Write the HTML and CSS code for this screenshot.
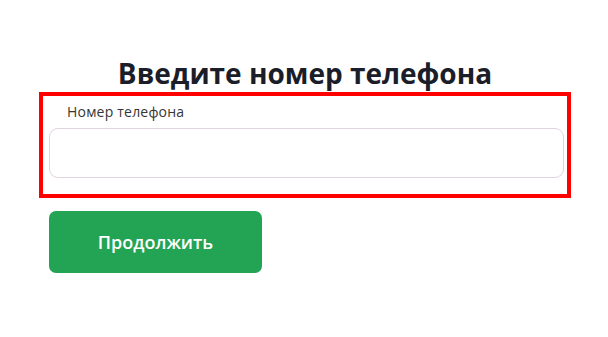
FILE: index.html
```html
<!DOCTYPE html>
<html lang="ru">
<head>
<meta charset="utf-8">
<title>Введите номер телефона</title>
<link rel="stylesheet" href="styles.css">
</head>
<body>
<div class="page">
  <h1 class="title">Введите номер телефона</h1>
  <div class="field">
    <label class="label" for="phone">Номер телефона</label>
    <input class="input" id="phone" type="tel">
  </div>
  <button class="btn" type="button">Продолжить</button>
</div>
</body>
</html>
```

FILE: styles.css
```css
html, body {
  margin: 0;
  padding: 0;
  background: #ffffff;
}
body {
  font-family: "Open Sans", "Noto Sans", sans-serif;
  color: #1b1b26;
}
.page {
  display: flex;
  flex-direction: column;
  padding: 0 37px 0 39px;
}
.title {
  margin: 54px 0 0 0;
  text-align: center;
  font-size: 28px;
  line-height: 38px;
  font-weight: 700;
  color: #1b1d29;
  letter-spacing: 0;
}
.field {
  border: 4px solid #ff0000;
  padding: 6px 3px 16px 6px;
  display: flex;
  flex-direction: column;
}
.label {
  padding-left: 18px;
  font-size: 14px;
  line-height: 20px;
  color: #363636;
  margin-bottom: 6px;
  letter-spacing: 0.2px;
}
.input {
  box-sizing: border-box;
  height: 50px;
  width: 100%;
  border: 1px solid #e0d4df;
  border-radius: 9px;
  background: #fff;
  outline: none;
  padding: 0 16px;
  font: inherit;
}
.btn {
  align-self: flex-start;
  margin: 13px 0 0 10px;
  width: 213px;
  height: 62px;
  border: none;
  border-radius: 7px;
  background: #23a454;
  color: #ffffff;
  font-family: "Open Sans", "Noto Sans", sans-serif;
  font-size: 18px;
  font-weight: 600;
}
```
